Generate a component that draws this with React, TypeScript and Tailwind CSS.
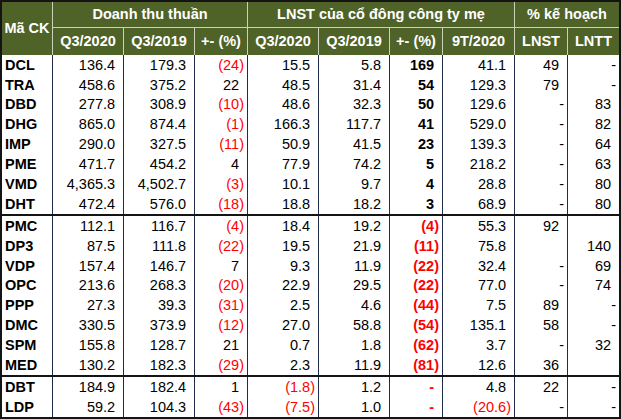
import React from "react";

type Cell = string;

interface Row {
  code: string;
  rev: [Cell, Cell, Cell];
  np: [Cell, Cell, Cell, Cell];
  plan: [Cell, Cell];
}

const groups: Row[][] = [
  [
    { code: "DCL", rev: ["136.4", "179.3", "(24)"], np: ["15.5", "5.8", "169", "41.1"], plan: ["49", "-"] },
    { code: "TRA", rev: ["458.6", "375.2", "22"], np: ["48.5", "31.4", "54", "129.3"], plan: ["79", "-"] },
    { code: "DBD", rev: ["277.8", "308.9", "(10)"], np: ["48.6", "32.3", "50", "129.6"], plan: ["-", "83"] },
    { code: "DHG", rev: ["865.0", "874.4", "(1)"], np: ["166.3", "117.7", "41", "529.0"], plan: ["-", "82"] },
    { code: "IMP", rev: ["290.0", "327.5", "(11)"], np: ["50.9", "41.5", "23", "139.3"], plan: ["-", "64"] },
    { code: "PME", rev: ["471.7", "454.2", "4"], np: ["77.9", "74.2", "5", "218.2"], plan: ["-", "63"] },
    { code: "VMD", rev: ["4,365.3", "4,502.7", "(3)"], np: ["10.1", "9.7", "4", "28.8"], plan: ["-", "80"] },
    { code: "DHT", rev: ["472.4", "576.0", "(18)"], np: ["18.8", "18.2", "3", "68.9"], plan: ["-", "80"] },
  ],
  [
    { code: "PMC", rev: ["112.1", "116.7", "(4)"], np: ["18.4", "19.2", "(4)", "55.3"], plan: ["92", ""] },
    { code: "DP3", rev: ["87.5", "111.8", "(22)"], np: ["19.5", "21.9", "(11)", "75.8"], plan: ["", "140"] },
    { code: "VDP", rev: ["157.4", "146.7", "7"], np: ["9.3", "11.9", "(22)", "32.4"], plan: ["-", "69"] },
    { code: "OPC", rev: ["213.6", "268.3", "(20)"], np: ["22.9", "29.5", "(22)", "77.0"], plan: ["-", "74"] },
    { code: "PPP", rev: ["27.3", "39.3", "(31)"], np: ["2.5", "4.6", "(44)", "7.5"], plan: ["89", "-"] },
    { code: "DMC", rev: ["330.5", "373.9", "(12)"], np: ["27.0", "58.8", "(54)", "135.1"], plan: ["58", "-"] },
    { code: "SPM", rev: ["155.8", "128.7", "21"], np: ["0.7", "1.8", "(62)", "3.7"], plan: ["-", "32"] },
    { code: "MED", rev: ["130.2", "182.3", "(29)"], np: ["2.3", "11.9", "(81)", "12.6"], plan: ["36", ""] },
  ],
  [
    { code: "DBT", rev: ["184.9", "182.4", "1"], np: ["(1.8)", "1.2", "-", "4.8"], plan: ["22", "-"] },
    { code: "LDP", rev: ["59.2", "104.3", "(43)"], np: ["(7.5)", "1.0", "-", "(20.6)"], plan: ["-", "-"] },
  ],
];

const cols = "grid grid-cols-[51px_71px_71px_53px_71px_71px_53px_72px_53px_51px]";

function Num({ v, bold, last }: { v: Cell; bold?: boolean; last?: boolean }) {
  const neg = v.startsWith("(");
  const dash = v === "-";
  const color = neg || (bold && dash) ? "text-[#ff0000]" : "text-black";
  return (
    <div
      className={`flex items-center justify-end pr-[3px] ${last ? "" : "border-r border-[#1f2d4a]"} ${bold ? "font-bold" : ""} ${color}`}
    >
      <span>{v}</span>
      {!neg && !dash && v !== "" && <span className="invisible">)</span>}
      {bold && dash && <span className="invisible">)</span>}
    </div>
  );
}

function DataRow({ r }: { r: Row }) {
  return (
    <div className={`${cols} h-[19.9px]`}>
      <div className="flex items-center pl-[3px] font-bold text-black border-r border-[#1f2d4a]">{r.code}</div>
      <Num v={r.rev[0]} />
      <Num v={r.rev[1]} />
      <Num v={r.rev[2]} />
      <Num v={r.np[0]} />
      <Num v={r.np[1]} />
      <Num v={r.np[2]} bold />
      <Num v={r.np[3]} />
      <Num v={r.plan[0]} />
      <Num v={r.plan[1]} last />
    </div>
  );
}

export default function App() {
  const h = "flex items-center justify-center text-white font-bold";
  return (
    <div className="w-[621px] h-[419px] bg-white border-2 border-[#141414] text-[14.5px] leading-none font-['Liberation_Sans',Arial,sans-serif] overflow-hidden">
      {/* header */}
      <div className={`${cols} grid-rows-[26px_27px] bg-[#4f6228]`}>
        <div className={`${h} row-span-2 border-r border-[#c9d1b8]`}>Mã CK</div>
        <div className={`${h} col-span-3 border-r border-b border-[#c9d1b8]`}>Doanh thu thuần</div>
        <div className={`${h} col-span-4 border-r border-b border-[#c9d1b8]`}>LNST của cổ đông công ty mẹ</div>
        <div className={`${h} col-span-2 border-b border-[#c9d1b8]`}>% kế hoạch</div>
        <div className={`${h} border-r border-[#c9d1b8]`}>Q3/2020</div>
        <div className={`${h} border-r border-[#c9d1b8]`}>Q3/2019</div>
        <div className={`${h} border-r border-[#c9d1b8]`}>+- (%)</div>
        <div className={`${h} border-r border-[#c9d1b8]`}>Q3/2020</div>
        <div className={`${h} border-r border-[#c9d1b8]`}>Q3/2019</div>
        <div className={`${h} border-r border-[#c9d1b8]`}>+- (%)</div>
        <div className={`${h} border-r border-[#c9d1b8]`}>9T/2020</div>
        <div className={`${h} border-r border-[#c9d1b8]`}>LNST</div>
        <div className={h}>LNTT</div>
      </div>
      {/* body */}
      {groups.map((g, i) => (
        <div key={i} className={i > 0 ? "border-t-2 border-[#141414]" : ""}>
          {g.map((r) => (
            <DataRow key={r.code} r={r} />
          ))}
        </div>
      ))}
    </div>
  );
}
